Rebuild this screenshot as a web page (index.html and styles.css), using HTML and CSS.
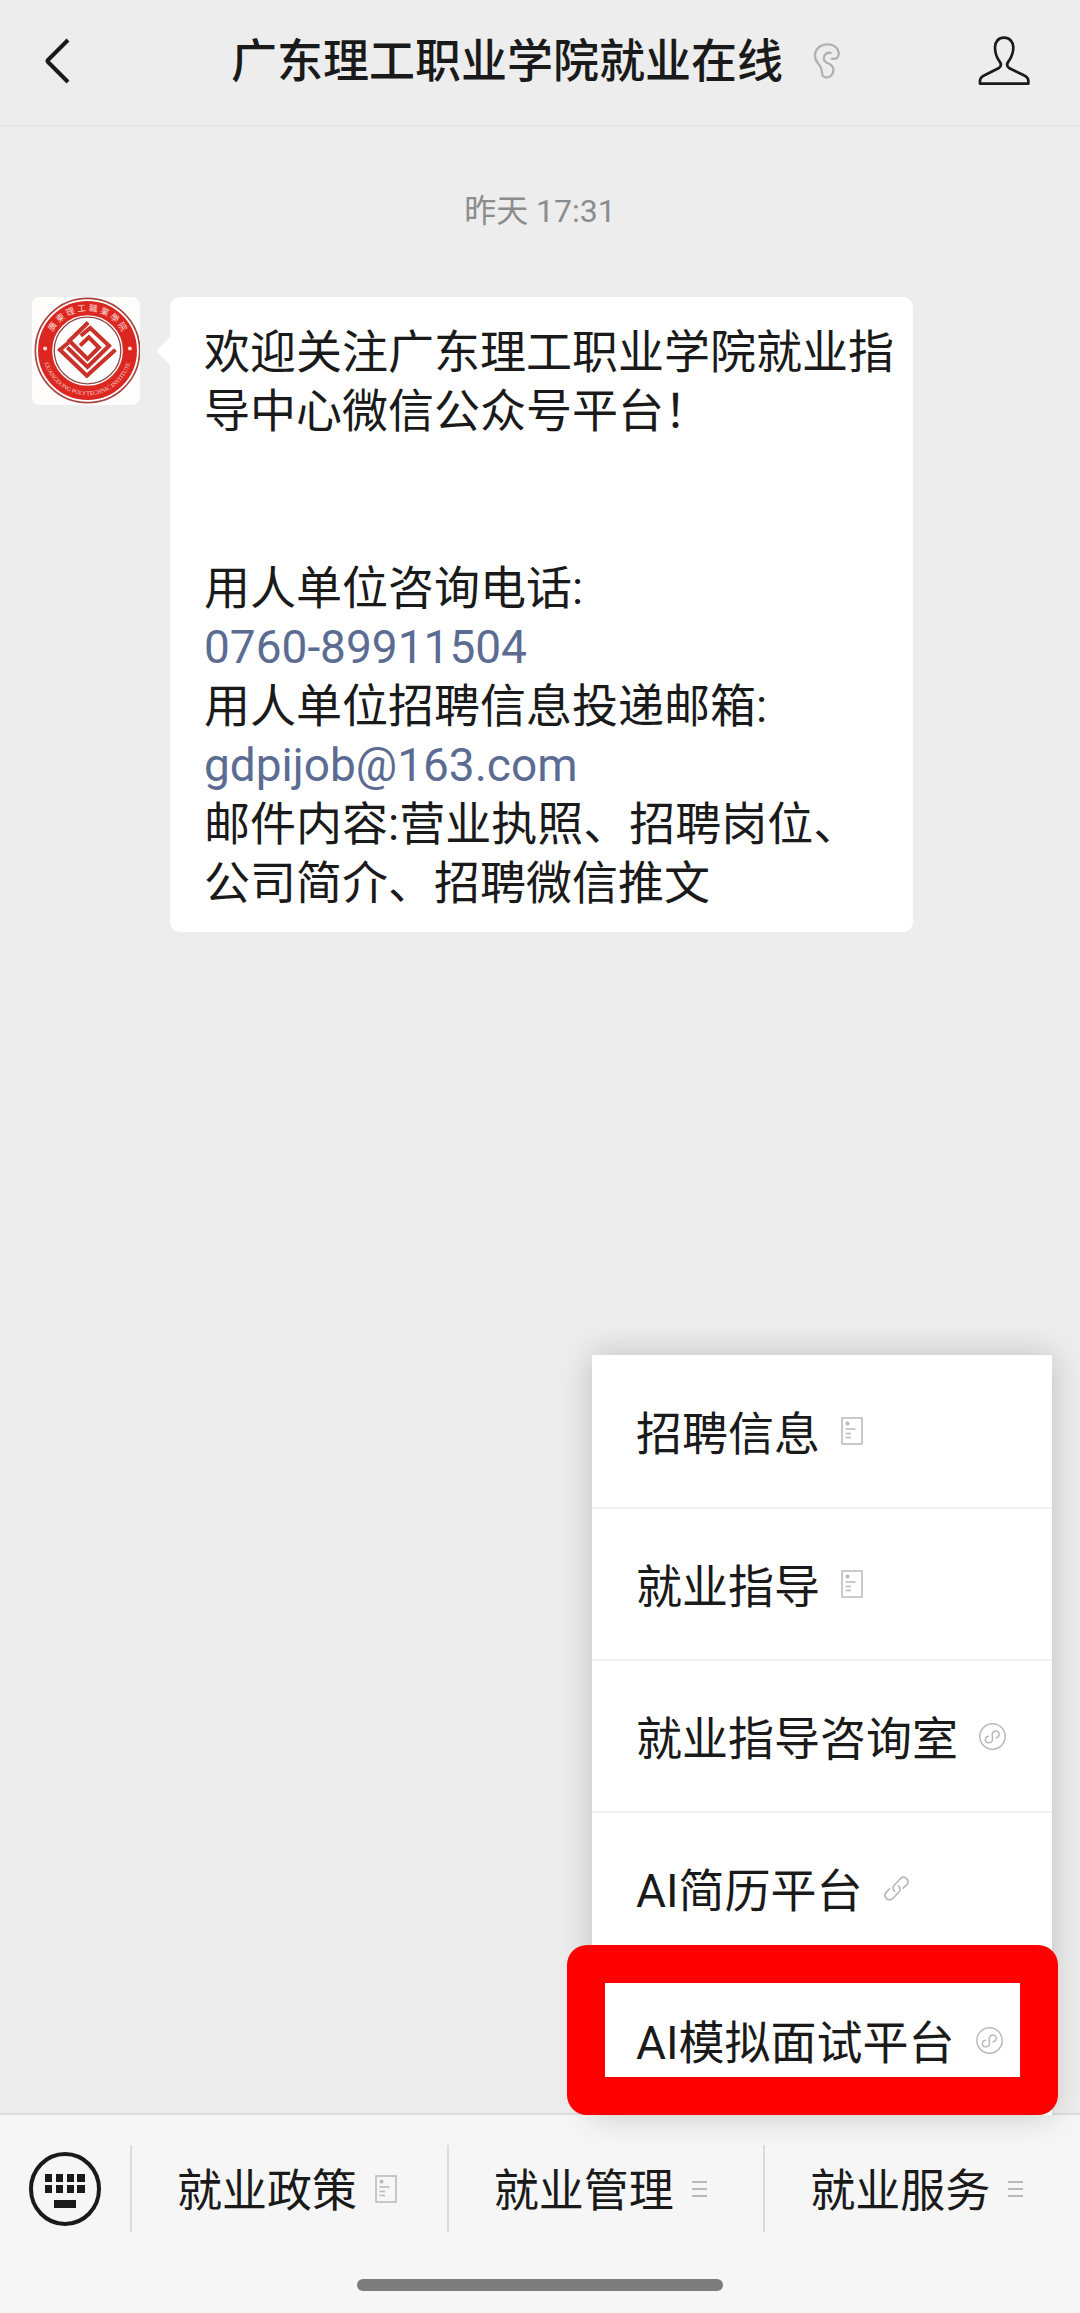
FILE: index.html
```html
<!DOCTYPE html>
<html lang="zh-CN">
<head>
<meta charset="utf-8">
<meta name="viewport" content="width=device-width, initial-scale=1">
<title>广东理工职业学院就业在线</title>
<link rel="stylesheet" href="styles.css">
</head>
<body>
<svg class="sprite" aria-hidden="true">
  <symbol id="doc" viewBox="0 0 22 28">
    <rect x="1" y="1" width="20" height="26" fill="none" stroke="currentColor" stroke-width="1.5"/>
    <circle cx="6.500" cy="6.500" r="2" fill="currentColor"/>
    <path d="M4.500 12h10M4.500 16.500h5.500M4.500 20.500h5.500" fill="none" stroke="currentColor" stroke-width="1.500"/>
  </symbol>
  <symbol id="mini" viewBox="0 0 82 82">
    <g fill="none" stroke="currentColor" stroke-width="4.500" stroke-linecap="round">
      <circle cx="41" cy="41" r="38.500"/>
      <path d="M52 45C60 43 63 37 61 31C58 23 46 21 41 30C39 35 41 42 41 48C41 56 36 60 30 60C22 60 17 54 20 47C21 43 25 40 29 40"/>
    </g>
  </symbol>
  <symbol id="link" viewBox="0 0 76 76">
    <g fill="none" stroke="currentColor" stroke-width="5" stroke-linecap="round" stroke-linejoin="round">
      <path d="M32 46C25 39 26 33 31 28L49 9C54 2 63 2 69 8C75 15 74 22 69 27L58 37"/>
      <path d="M44 30C51 37 50 43 45 49L28 67C22 74 13 74 7 68C1 61 2 54 7 49L17 39"/>
    </g>
  </symbol>
  <symbol id="lines" viewBox="0 0 16 16">
    <path d="M0 1h15M0 8h15M0 15h15" fill="none" stroke="currentColor" stroke-width="2"/>
  </symbol>
</svg>
<div class="app">
  <header class="topbar">
    <button class="iconbtn back" type="button" aria-label="返回">
      <svg width="26" height="48" viewBox="0 0 26 48"><path d="M24 3L4 23q-1 1 0 2L24 45" fill="none" stroke="currentColor" stroke-width="4"/></svg>
    </button>
    <div class="heading">
      <h1 class="title">广东理工职业学院就业在线</h1>
      <svg class="ear" width="28" height="38" viewBox="40 47 86 114"><path d="M98 97C113 99 120 91 119 80C117 62 102 53 84 53C62 53 46 68 46 88C46 104 54 109 62 120C69 131 66 142 70 149C77 158 94 155 99 145C105 134 103 123 95 116C86 109 73 109 73 96C73 84 83 77 94 79" fill="none" stroke="currentColor" stroke-width="7" stroke-linecap="round" stroke-linejoin="round"/></svg>
    </div>
    <button class="iconbtn person" type="button" aria-label="公众号资料">
      <svg width="52" height="50" viewBox="536 32 154 150"><path d="M613 37C596 37 586 50 586 66C586 84 590 96 600 109C606 117 603 124 598 128L556 149C543 155 540 160 541 175H686C687 160 684 155 671 149L628 128C623 124 620 117 626 109C636 96 641 84 641 66C641 50 630 37 613 37Z" fill="none" stroke="currentColor" stroke-width="8" stroke-linejoin="round"/></svg>
    </button>
  </header>

  <main class="chat">
    <time class="stamp">昨天 17:31</time>
    <div class="message">
      <svg class="avatar" viewBox="0 0 321 321" role="img" aria-label="学院校徽">
        <rect width="321" height="321" fill="#fffdfb"/>
        <circle cx="165" cy="159" r="155" fill="#fff" stroke="#a8433f" stroke-width="5"/>
        <circle cx="165" cy="159" r="126" fill="none" stroke="#dc2620" stroke-width="42"/>
        <circle cx="165" cy="159" r="99" fill="#fff" stroke="#8c4a48" stroke-width="4"/>
        <path id="arc-top" d="M48 159A117 117 0 0 1 282 159" fill="none"/>
        <path id="arc-bottom" d="M32 159A133 133 0 0 0 298 159" fill="none"/>
        <text class="seal seal-cn"><textPath href="#arc-top" startOffset="50%" text-anchor="middle">廣 東 理 工 職 業 學 院</textPath></text>
        <text class="seal seal-en"><textPath href="#arc-bottom" startOffset="50%" text-anchor="middle">GUANGDONG POLYTECHNIC INSTITUTE</textPath></text>
        <circle cx="39" cy="153" r="6" fill="#fbd9d2"/>
        <circle cx="291" cy="153" r="6" fill="#fbd9d2"/>
        <g transform="translate(-13 -16)" fill="none" stroke="#c8322b" stroke-width="12" stroke-linejoin="miter">
          <path d="M180 92L124 146L178 200L212 166L182 136L156 160"/>
          <path d="M158 131L186 108L242 161L178 224L118 166"/>
          <path d="M122 151L96 173L176 250L261 173"/>
        </g>
      </svg>
      <div class="bubble">
        <p>欢迎关注广东理工职业学院就业指导中心微信公众号平台！</p>
        <p><br></p>
        <p><br></p>
        <p>用人单位咨询电话:</p>
        <p><a href="tel:0760-89911504">0760-89911504</a></p>
        <p>用人单位招聘信息投递邮箱:</p>
        <p><a href="mailto:gdpijob@163.com">gdpijob@163.com</a></p>
        <p>邮件内容:营业执照、招聘岗位、公司简介、招聘微信推文</p>
      </div>
    </div>
  </main>

  <footer class="bottombar">
    <nav class="tabs">
      <button class="keyboard" type="button" aria-label="切换到键盘">
        <svg width="72" height="74" viewBox="0 0 72 74">
          <ellipse cx="36" cy="37" rx="34" ry="35" fill="none" stroke="currentColor" stroke-width="4"/>
          <path d="M16 22h7v8h-7zM27 22h7v8h-7zM38 22h7v8h-7zM48 22h8v8h-8zM16 33h7v8h-7zM27 33h7v8h-7zM38 33h7v8h-7zM48 33h8v8h-8zM25 48h22v8h-22z" fill="currentColor"/>
        </svg>
      </button>
      <button class="tab" type="button"><span class="label">就业政策</span><svg class="hint" width="22" height="28"><use href="#doc"/></svg></button>
      <button class="tab" type="button"><span class="label">就业管理</span><svg class="hint" width="16" height="16"><use href="#lines"/></svg></button>
      <button class="tab" type="button"><span class="label">就业服务</span><svg class="hint" width="16" height="16"><use href="#lines"/></svg></button>
    </nav>
    <div class="home-indicator"></div>

    <div class="menu">
      <button class="menu-item" type="button"><span class="label">招聘信息</span><svg class="hint" width="22" height="28"><use href="#doc"/></svg></button>
      <button class="menu-item" type="button"><span class="label">就业指导</span><svg class="hint" width="22" height="28"><use href="#doc"/></svg></button>
      <button class="menu-item" type="button"><span class="label">就业指导咨询室</span><svg class="hint" width="27" height="27"><use href="#mini"/></svg></button>
      <button class="menu-item" type="button"><span class="label">AI简历平台</span><svg class="hint" width="25" height="25"><use href="#link"/></svg></button>
      <button class="menu-item marked" type="button"><span class="label">AI模拟面试平台</span><svg class="hint" width="27" height="27"><use href="#mini"/></svg></button>
    </div>
  </footer>
</div>
</body>
</html>
```
FILE: styles.css
```css
* {
  box-sizing: border-box;
}

body {
  margin: 0;
  background: #ededed;
  color: #1a1a1a;
  font-family: Roboto, "Noto Sans CJK SC", sans-serif;
  font-size: 46px;
}

button {
  margin: 0;
  padding: 0;
  border: 0;
  background: none;
  color: inherit;
  font: inherit;
  text-align: left;
}

svg {
  display: block;
  flex: none;
}

p {
  margin: 0;
}

a {
  color: #5b6b92;
  text-decoration: none;
}

.sprite {
  position: absolute;
  width: 0;
  height: 0;
}

.app {
  display: flex;
  flex-direction: column;
  min-height: 100vh;
}

/* Top bar */

.topbar {
  display: flex;
  align-items: center;
  justify-content: space-between;
  height: 127px;
  padding: 0 50px 4px 44px;
  border-bottom: 2px solid #e4e4e4;
}

.heading {
  display: flex;
  align-items: center;
  gap: 30px;
  padding-left: 24px;
}

.title {
  margin: 0;
  font-size: 46px;
  font-weight: 500;
  line-height: 60px;
}

.ear {
  color: #b0b0b0;
}

/* Conversation */

.chat {
  flex: 1;
  display: flex;
  flex-direction: column;
}

.stamp {
  align-self: center;
  margin: 64px 0 66px;
  color: #8c8c8c;
  font-size: 32px;
  line-height: 40px;
}

.message {
  display: flex;
  align-items: flex-start;
  gap: 30px;
  padding: 0 32px;
}

.avatar {
  width: 108px;
  height: 108px;
  border-radius: 8px;
}

.seal {
  fill: #fbd9d2;
  font-family: "Liberation Serif", "Noto Sans CJK TC", serif;
}

.seal-cn {
  font-size: 26px;
}

.seal-en {
  font-size: 18px;
}

.bubble {
  position: relative;
  width: 743px;
  padding: 26px 16px 19px 34px;
  border-radius: 10px;
  background: #fff;
  line-height: 59px;
}

.bubble::before {
  content: "";
  position: absolute;
  top: 42px;
  left: -9px;
  width: 24px;
  height: 24px;
  border-radius: 3px;
  background: #fff;
  transform: rotate(45deg);
}

/* Bottom bar */

.bottombar {
  position: relative;
  padding: 30px 0 22px;
  border-top: 2px solid #dcdcdc;
  background: #f6f6f6;
}

.tabs {
  display: grid;
  grid-template-columns: 130px repeat(3, 1fr);
  height: 87px;
}

.keyboard {
  display: flex;
  align-items: center;
  padding-left: 29px;
}

.tab {
  display: flex;
  align-items: center;
  gap: 18px;
  padding-left: 45px;
  border-left: 2px solid #dcdcdc;
  font-size: 45px;
}

.label {
  padding-top: 6px;
  line-height: 60px;
}

.hint {
  color: #b8b8b8;
}

.home-indicator {
  width: 366px;
  height: 12px;
  margin: 47px auto 0;
  border-radius: 6px;
  background: #7c7c7c;
}

/* Pop-up menu above the last tab */

.menu {
  position: absolute;
  right: 28px;
  bottom: 198px;
  width: 460px;
  background: #fff;
  box-shadow: 0 0 32px rgba(0, 0, 0, 0.2);
}

.menu-item {
  position: relative;
  display: flex;
  align-items: center;
  gap: 21px;
  width: 100%;
  height: 152px;
  padding-left: 44px;
}

.menu-item + .menu-item {
  border-top: 2px solid #f0f0f0;
}

.marked::after {
  content: "";
  position: absolute;
  inset: -20px -6px 0 -25px;
  border: 38px solid #f00;
  border-radius: 20px;
}
```
